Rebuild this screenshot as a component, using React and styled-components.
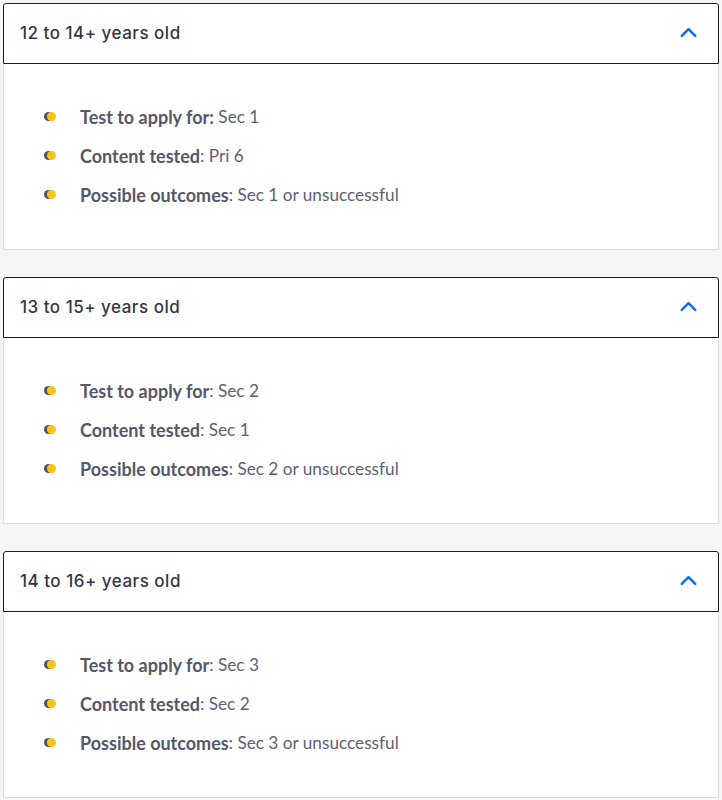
import React from 'react'
import styled, { createGlobalStyle } from 'styled-components'
import { ChevronUp } from 'lucide-react'

const GlobalStyle = createGlobalStyle`
    body {
        margin: 0;
        background: #f4f5f4;
        font-family: Lato, "Open Sans", sans-serif;
    }
`;

const Page = styled.div`
    display: flex;
    flex-direction: column;
    gap: 27px;
    padding: 3px 3px 3px 3px;
`;

const Card = styled.div`
    display: flex;
    flex-direction: column;
`;

const Header = styled.button`
    display: flex;
    align-items: center;
    justify-content: space-between;
    height: 61px;
    box-sizing: border-box;
    padding: 0 16px 2px 16px;
    background: #ffffff;
    border: 1px solid #1c1c1c;
    border-radius: 3px 3px 0 0;
    cursor: pointer;
    font-family: Inter, "Open Sans", sans-serif;
    font-size: 17px;
    font-weight: 500;
    letter-spacing: 0.5px;
    color: #33364a;
    text-align: left;
`;

const Body = styled.div`
    background: #ffffff;
    border: 1px solid #dcdcdc;
    border-top: none;
    padding: 33px 0 35px 40px;
`;

const List = styled.ul`
    list-style: none;
    margin: 0;
    padding: 0;
`;

const Item = styled.li`
    display: flex;
    align-items: center;
    height: 39px;
    font-size: 17.2px;
    color: #5d6172;
`;

const Bullet = styled.span`
    position: relative;
    width: 12px;
    height: 9px;
    margin-right: 24px;
    flex-shrink: 0;

    &::before {
        content: '';
        position: absolute;
        left: 0;
        top: 0;
        width: 9px;
        height: 9px;
        border-radius: 50%;
        background: #4e5263;
    }

    &::after {
        content: '';
        position: absolute;
        left: 3px;
        top: 0;
        width: 9px;
        height: 9px;
        border-radius: 50%;
        background: #fcc419;
    }
`;

const Label = styled.strong`
    font-size: 18px;
    font-weight: 700;
    color: #545869;
`;

const groups = [
    { title: '12 to 14+ years old', apply: 'Sec 1', tested: 'Pri 6', applyColon: true },
    { title: '13 to 15+ years old', apply: 'Sec 2', tested: 'Sec 1' },
    { title: '14 to 16+ years old', apply: 'Sec 3', tested: 'Sec 2' },
]

const Group = ({ title, apply, tested, applyColon }) => (
    <Card>
        <Header>
            {title}
            <ChevronUp size={27} strokeWidth={2.2} color="#0b6cf5" />
        </Header>
        <Body>
            <List>
                <Item>
                    <Bullet />
                    {applyColon
                        ? <><Label>Test to apply for:</Label>&nbsp;{apply}</>
                        : <><Label>Test to apply for</Label>: {apply}</>}
                </Item>
                <Item>
                    <Bullet />
                    <Label>Content tested</Label>: {tested}
                </Item>
                <Item>
                    <Bullet />
                    <Label>Possible outcomes</Label>: {apply} or unsuccessful
                </Item>
            </List>
        </Body>
    </Card>
)

const App = () => {
    return (
        <>
            <GlobalStyle />
            <Page>
                {groups.map(g => <Group key={g.title} {...g} />)}
            </Page>
        </>
    )
}

export default App
